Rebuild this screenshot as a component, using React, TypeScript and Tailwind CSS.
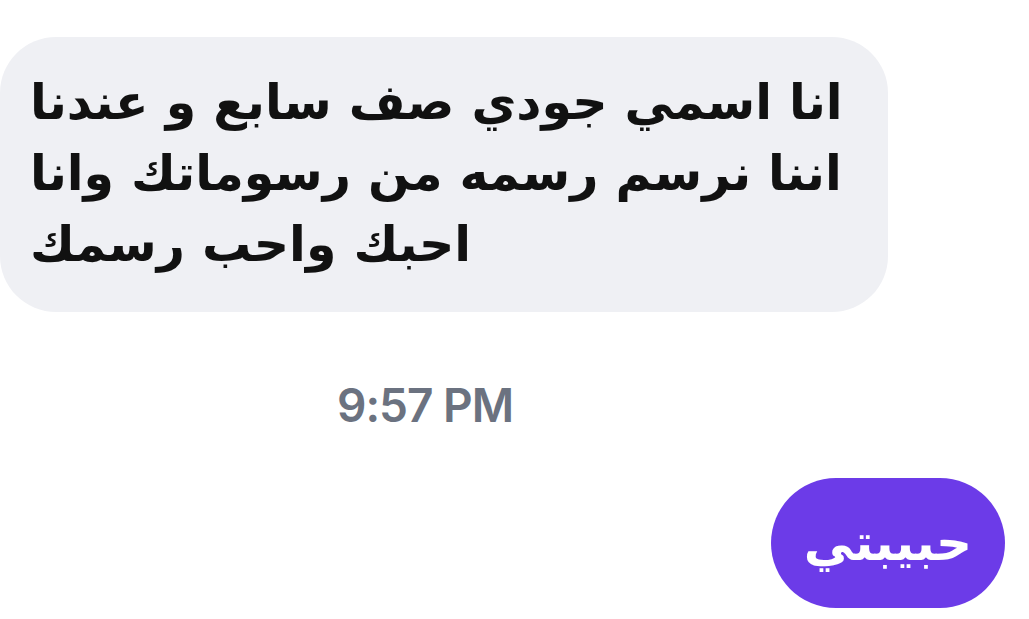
import React from "react";

const arabic = { fontFamily: '"DejaVu Sans", "Noto Sans", sans-serif' };

const lines = ["انا اسمي جودي صف سابع و عندنا", "اننا نرسم رسمه من رسوماتك وانا", "احبك واحب رسمك"];

export default function App() {
  return (
    <div className="flex h-[619px] w-[1029px] flex-col overflow-hidden bg-white">
      {/* incoming message */}
      <div className="mt-[37px] flex h-[275px] w-[888px] items-start rounded-[56px] bg-[#eff0f4] pl-[30px] pt-[30px]">
        <div dir="rtl" className="text-left text-[49px] font-bold leading-[71px] text-[#111111]" style={arabic}>
          {lines.map((l) => (
            <div key={l} className="whitespace-nowrap">
              {l}
            </div>
          ))}
        </div>
      </div>

      {/* timestamp */}
      <div
        className="mt-[70px] pl-[337px] text-[46px] leading-[46px] tracking-[-1px] text-[#6b7280]"
        style={{ fontFamily: '"Inter", "Liberation Sans", sans-serif', fontWeight: 600 }}
      >
        9:57 PM
      </div>

      {/* outgoing message */}
      <div className="mr-[24px] mt-[50px] flex h-[130px] w-[234px] items-center justify-center self-end rounded-full bg-[#6c3be8]">
        <span dir="rtl" className="text-[50px] font-bold leading-none text-white" style={arabic}>
          حبيبتي
        </span>
      </div>
    </div>
  );
}
